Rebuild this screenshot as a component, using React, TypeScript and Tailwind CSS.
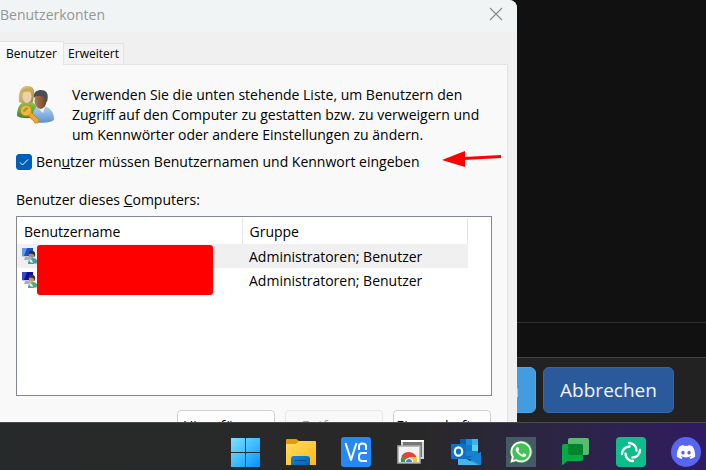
import type { ReactNode } from "react";
import { FaDiscord, FaWhatsapp } from "react-icons/fa";

function UsersKeyIcon() {
  return (
    <svg viewBox="0 0 40 40" className="size-10 shrink-0" aria-hidden="true">
      <defs>
        <linearGradient id="hair" x1="0" y1="0" x2="1" y2="1">
          <stop offset="0" stopColor="#e3cf8a" />
          <stop offset="1" stopColor="#a08a45" />
        </linearGradient>
        <linearGradient id="green" x1="0" y1="0" x2="0" y2="1">
          <stop offset="0" stopColor="#8cc653" />
          <stop offset="1" stopColor="#3f8130" />
        </linearGradient>
        <linearGradient id="blue" x1="0" y1="0" x2="0" y2="1">
          <stop offset="0" stopColor="#b4d4f3" />
          <stop offset="1" stopColor="#5b92d2" />
        </linearGradient>
        <linearGradient id="face" x1="0" y1="0" x2="1" y2="0">
          <stop offset="0" stopColor="#b07b50" />
          <stop offset="1" stopColor="#6b432b" />
        </linearGradient>
      </defs>
      <path d="M1 31C1 22 4 18 9 17h7c4 2 5 6 5 14-5 3-15 3-20 0z" fill="url(#green)" />
      <path d="M3 17C2 7 5 1 11 1s8 3 7 10l-1 6c-4 2-10 2-14 0z" fill="url(#hair)" />
      <ellipse cx="11" cy="11.500" rx="4.500" ry="6.500" fill="#edcfac" />
      <path d="M4 8c2-5 9-6 13-2-4 1-9 0-13 2z" fill="#c8aa4c" />
      <path d="M17 36V28c1-5 5-7 9-7 7 0 12 5 12 14-4 3-16 4-21 1z" fill="url(#blue)" />
      <path d="M21 22l6 6 2-6z" fill="#f0f4f9" />
      <ellipse cx="24.500" cy="15.500" rx="6" ry="8.500" fill="url(#face)" />
      <path d="M18 13c-1-6 3-8 7-8 6 0 8 4 6 12l-2-1c0-4-2-5-5-5-3 0-5 0-6 2z" fill="#4a4f56" />
      <path d="M14 26l9 9-1 3h-3l-2-3-2-1-1-2-3-2z" fill="#f3a62c" stroke="#c47a14" strokeWidth=".7" />
      <circle cx="10" cy="25.500" r="5.500" fill="#f6b53a" stroke="#c9841d" strokeWidth=".8" />
      <path d="M6.500 26l4-4 2 1-4 4z" fill="#75a83c" />
    </svg>
  );
}

function UserRowIcon({ dark }: { dark?: boolean }) {
  return (
    <svg viewBox="0 0 16 16" className="size-4 shrink-0" aria-hidden="true">
      <path d="M0 0h11v9H0z" fill="#c5cbd6" />
      <path d="M0 0h11v8H0z" fill={dark ? "#0a0f9c" : "#1d51c4"} />
      <path d="M0 0h5L2 8H0z" fill={dark ? "#3a48d0" : "#5e9bef"} />
      <path d="M3 9h5l1 3H2z" fill="#aab0ba" />
      <path d="M6 16c0-4 2-6 5-6s5 3 5 5c-3 1-7 1-10 1z" fill={dark ? "#52a97c" : "#3f9f9e"} />
      <path d="M7 11l3 1 1 3-3-1z" fill="#e8eff0" />
      <circle cx="10" cy="6.500" r="3.200" fill={dark ? "#c39268" : "#8c8e90"} />
      <path d="M6.500 6c0-3 2-4 4-3 3 0 3 4 2 6 0-3-2-4-6-3z" fill="#39322f" />
    </svg>
  );
}

function WindowsLogo() {
  return (
    <svg viewBox="0 0 30 30" className="size-full">
      <defs>
        <linearGradient id="win" gradientUnits="userSpaceOnUse" x1="0" y1="0" x2="29" y2="29">
          <stop offset="0" stopColor="#87e0ff" />
          <stop offset=".5" stopColor="#41bfff" />
          <stop offset="1" stopColor="#0892fa" />
        </linearGradient>
      </defs>
      <path d="M0 1h14v14H0zM15 1h14v14H15zM0 16h14v14H0zM15 16h14v14H15z" fill="url(#win)" />
    </svg>
  );
}

function FolderLogo() {
  return (
    <svg viewBox="0 0 30 30" className="size-full">
      <defs>
        <linearGradient id="folder" x1="0" y1="0" x2="1" y2="1">
          <stop offset="0" stopColor="#ffdc68" />
          <stop offset="1" stopColor="#ffb90f" />
        </linearGradient>
        <linearGradient id="tray" x1="0" y1="0" x2="1" y2="1">
          <stop offset="0" stopColor="#0f84d8" />
          <stop offset="1" stopColor="#0564ad" />
        </linearGradient>
      </defs>
      <path d="M0 3q0-1 1-1h9q1 0 3 2v5H0z" fill="#e29c05" />
      <path d="M0 7h9q1 0 2-1l2-2h16q1 0 1 1v23H0z" fill="url(#folder)" />
      <path d="M5 28v-6q0-3 3-3h13q3 0 3 3v6z" fill="url(#tray)" />
      <path d="M9 23.500h11" stroke="#064a80" strokeWidth="1" />
    </svg>
  );
}

function RemoteViewerLogo() {
  return (
    <svg viewBox="0 0 30 30" className="size-full" fill="none" stroke="#fff" strokeWidth="2">
      <rect width="30" height="30" rx="3" fill="#2489f7" stroke="none" />
      <path d="M4.500 6l5.500 17 5.500-17" strokeLinejoin="round" />
      <path d="M18 13V9Q18 6.500 21.500 6.500T25 9V13" />
      <path d="M26 16h-5q-3 0-3 3v2q0 3 3 3h5" />
    </svg>
  );
}

function ChromeRemoteLogo() {
  return (
    <svg viewBox="0 0 30 30" className="size-full">
      <path d="M6 4h21v17H6z" fill="#777" stroke="#d5d5d5" strokeWidth="2" />
      <path d="M5 4h23" stroke="#fff" strokeWidth="2" />
      <path d="M2 9h22v17H2z" fill="#f3f3f3" stroke="#a9a9a9" strokeWidth="1.500" />
      <path d="M5.500 19a8.500 8.500 0 0 1 15 1H13l-2 5z" fill="#df4637" />
      <path d="M5 25a8 8 0 0 1 1-6l5 6z" fill="#24a152" />
      <path d="M13 20h7.500q1 2 .5 5h-6z" fill="#fbc72f" />
      <path d="M9 25a4 4 0 1 1 8 0z" fill="#fff" />
      <path d="M10 25a3 3 0 1 1 6 0z" fill="#3f7ee8" />
    </svg>
  );
}

function OutlookLogo() {
  return (
    <svg viewBox="0 0 30 30" className="size-full">
      <path d="M9 2h18v20H9z" fill="#0f6cbd" />
      <path d="M9 2h6v6H9z" fill="#0a5da8" />
      <path d="M15 2h6v6h-6z" fill="#1b8bdc" />
      <path d="M21 2h6v6h-6z" fill="#35b6f2" />
      <path d="M15 8h6v6h-6z" fill="#1377cb" />
      <path d="M21 8h6v6h-6z" fill="#52d4fc" />
      <path d="M15 14h12v5H15z" fill="#1b7fd0" />
      <path d="M7 17l12 7L30 15v12q0 1-1 1H8q-1 0-1-1z" fill="#28a1e6" />
      <path d="M30 15v12q0 1-1 1L17 21z" fill="#1682d3" />
      <path d="M7 18l20 10H8q-1 0-1-1z" fill="#45b5ec" />
      <rect y="7" width="15" height="15" rx="1" fill="#0872cc" />
      <ellipse cx="7.500" cy="14.500" rx="3.700" ry="4.200" fill="none" stroke="#fff" strokeWidth="2.200" />
    </svg>
  );
}

function WhatsAppLogo() {
  return (
    <span className="relative flex size-full items-center justify-center bg-[#455a64]">
      <svg viewBox="0 0 30 30" className="absolute size-full">
        <path d="M4 26l1.500-6A11 11 0 1 1 10 24.500z" fill="#40c351" />
      </svg>
      <FaWhatsapp className="relative size-6 text-white" />
    </span>
  );
}

function ChatLogo() {
  return (
    <svg viewBox="0 0 30 30" className="size-full">
      <rect x="7" y="1" width="21" height="17" rx="2" fill="#5bb974" />
      <path d="M1 9q0-2 2-2h17q2 0 2 2v13q0 2-2 2H6l-4 4q-1 0-1-1z" fill="#00ac47" />
      <path d="M7 7h13q2 0 2 2v9H9q-2 0-2-2z" fill="#00832d" />
    </svg>
  );
}

function SwirlLogo() {
  const arc = "M13 6A7.500 7.500 0 0 1 20.500 13.500";
  return (
    <svg viewBox="0 0 30 30" className="size-full" fill="none" stroke="#fff" strokeWidth="2.400" strokeLinecap="round">
      <rect width="30" height="30" rx="4" fill="#0dbd8b" stroke="none" />
      <path d={arc} />
      <path d={arc} transform="rotate(90 15 15)" />
      <path d={arc} transform="rotate(180 15 15)" />
      <path d={arc} transform="rotate(270 15 15)" />
    </svg>
  );
}

function DiscordLogo() {
  return (
    <span className="flex size-full items-center justify-center rounded-full bg-[#5865f2]">
      <FaDiscord className="size-5 text-white" />
    </span>
  );
}

const apps: { name: string; icon: ReactNode }[] = [
  { name: "Start", icon: <WindowsLogo /> },
  { name: "Explorer", icon: <FolderLogo /> },
  { name: "VNC Viewer", icon: <RemoteViewerLogo /> },
  { name: "Chrome Remote Desktop", icon: <ChromeRemoteLogo /> },
  { name: "Outlook", icon: <OutlookLogo /> },
  { name: "WhatsApp", icon: <WhatsAppLogo /> },
  { name: "Google Chat", icon: <ChatLogo /> },
  { name: "Element", icon: <SwirlLogo /> },
  { name: "Discord", icon: <DiscordLogo /> },
];

function Taskbar() {
  return (
    <nav className="relative flex h-12 shrink-0 items-start justify-end gap-[25px] border-t border-[#4b4b4f] bg-linear-to-r from-[#272a2a] from-0% via-[#292829] via-60% to-[#301a61] pt-[14px] pr-[5px]">
      {apps.map((app) => (
        <button key={app.name} type="button" aria-label={app.name} className="block size-[30px] shrink-0">
          {app.icon}
        </button>
      ))}
    </nav>
  );
}

function BackgroundApp() {
  return (
    <section className="absolute inset-0 flex flex-col bg-[#111111]">
      <div className="flex-1" />
      <div className="h-[35px] border-t border-[#303030]" />
      <footer className="flex justify-end gap-[7px] border-t border-[#444444] bg-[#222222] pt-[9px] pr-8 pb-[9px] text-[19px] leading-6 text-[#f0f4fa]">
        <button type="button" className="h-[46px] rounded-md border border-[#50a8e8] bg-[#429de0] px-4">
          Speichern
        </button>
        <button type="button" className="h-[46px] w-[131px] rounded-md border border-[#3568ab] bg-[#2a5a9b]">
          Abbrechen
        </button>
      </footer>
    </section>
  );
}

function DialogButton({ children, disabled }: { children: ReactNode; disabled?: boolean }) {
  return (
    <button
      type="button"
      disabled={disabled}
      className="h-[31px] w-[98px] rounded border border-[#d0d0d0] bg-[#fdfdfd] pt-px text-sm leading-5 disabled:border-[#e7e7e7] disabled:bg-[#f8f8f8] disabled:text-[#9d9d9d]"
    >
      {children}
    </button>
  );
}

function UsersTable() {
  return (
    <div className="relative h-[180px] border border-[#828790] bg-white pt-px">
      <table className="w-[451px] table-fixed border-collapse text-left text-sm leading-5">
        <thead>
          <tr className="h-[26px]">
            <th className="w-[225px] border-r border-[#e5e5e5] p-0 pt-[2px] pl-[7px] font-normal">Benutzername</th>
            <th className="border-r border-[#e5e5e5] p-0 pt-[2px] pl-[7px] font-normal">Gruppe</th>
          </tr>
        </thead>
        <tbody>
          <tr className="h-6 bg-[#f0f0f0]">
            <td className="p-0 pl-[5px]">
              <UserRowIcon />
            </td>
            <td className="p-0 pt-[2px] pl-[7px]">Administratoren; Benutzer</td>
          </tr>
          <tr className="h-6">
            <td className="p-0 pl-[5px]">
              <UserRowIcon dark />
            </td>
            <td className="p-0 pt-[2px] pl-[7px]">Administratoren; Benutzer</td>
          </tr>
        </tbody>
      </table>
      <div className="absolute top-7 left-5 h-[50px] w-44 rounded-[3px] bg-[#ff0000]" />
    </div>
  );
}

function AccountsDialog() {
  return (
    <section className="relative flex w-[517px] flex-col rounded-tr-lg bg-[#f0f0f0] text-black">
      <header className="flex h-8 items-start justify-between rounded-tr-lg bg-[#f0f4f4] pt-[5px] pr-[14px]">
        <h1 className="text-sm leading-5 text-[#949696]">Benutzerkonten</h1>
        <button type="button" aria-label="Schließen" className="pt-[2px]">
          <svg viewBox="0 0 14 14" className="size-[14px]" stroke="#858888" strokeWidth="1.100">
            <path d="M1 1l12 12M13 1L1 13" />
          </svg>
        </button>
      </header>

      <div role="tablist" className="flex items-end pt-[9px] text-xs leading-5">
        <button
          type="button"
          role="tab"
          aria-selected="true"
          className="relative -mb-px h-6 w-16 border-t border-r border-[#e3e3e3] bg-[#f9f9f9] text-center"
        >
          Benutzer
        </button>
        <button
          type="button"
          role="tab"
          aria-selected="false"
          className="h-[21px] w-15 border-t border-r border-[#e3e3e3] bg-[#f3f3f3] text-center"
        >
          Erweitert
        </button>
      </div>

      <div role="tabpanel" className="mr-[9px] border-t border-r border-[#e3e3e3] bg-[#f9f9f9] pt-5 pr-[15px] pl-4">
        <div className="flex gap-4">
          <UsersKeyIcon />
          <p className="text-sm leading-5">
            Verwenden Sie die unten stehende Liste, um Benutzern den Zugriff auf den Computer zu gestatten bzw. zu
            verweigern und um Kennwörter oder andere Einstellungen zu ändern.
          </p>
        </div>

        <label className="mt-[7px] flex items-center gap-1 text-sm leading-5">
          <span className="grid size-4 place-items-center">
            <input
              type="checkbox"
              defaultChecked
              className="peer col-start-1 row-start-1 size-4 appearance-none rounded-[3px] border border-[#005fb8] bg-white checked:bg-[#005fb8]"
            />
            <svg
              viewBox="0 0 16 16"
              className="pointer-events-none invisible col-start-1 row-start-1 size-4 peer-checked:visible"
              fill="none"
              stroke="#fff"
            >
              <path d="M4 8.500l2.500 2.500L12 5.500" />
            </svg>
          </span>
          <span>
            Ben<u>u</u>tzer müssen Benutzernamen und Kennwort eingeben
          </span>
        </label>
        <svg viewBox="0 0 60 18" className="absolute top-[150px] left-[442px] h-[18px] w-[60px]" aria-hidden="true">
          <path d="M22 8.500L59 6.500" stroke="#ff0000" strokeWidth="3" />
          <path d="M0 10L23 1v16z" fill="#ff0000" />
        </svg>

        <h2 className="mt-[18px] mb-[6px] text-sm leading-5">
          Benutzer dieses <u>C</u>omputers:
        </h2>
        <UsersTable />
        <div className="mt-[14px] flex justify-end gap-[10px] pr-px">
          <DialogButton>Hinzufügen...</DialogButton>
          <DialogButton disabled>Entfernen</DialogButton>
          <DialogButton>Eigenschaften</DialogButton>
        </div>
      </div>
    </section>
  );
}

export default function App() {
  return (
    <div className="flex h-screen flex-col overflow-hidden bg-[#111111] font-['Open_Sans',sans-serif]">
      <main className="relative min-h-0 flex-1 overflow-hidden">
        <BackgroundApp />
        <AccountsDialog />
      </main>
      <Taskbar />
    </div>
  );
}
